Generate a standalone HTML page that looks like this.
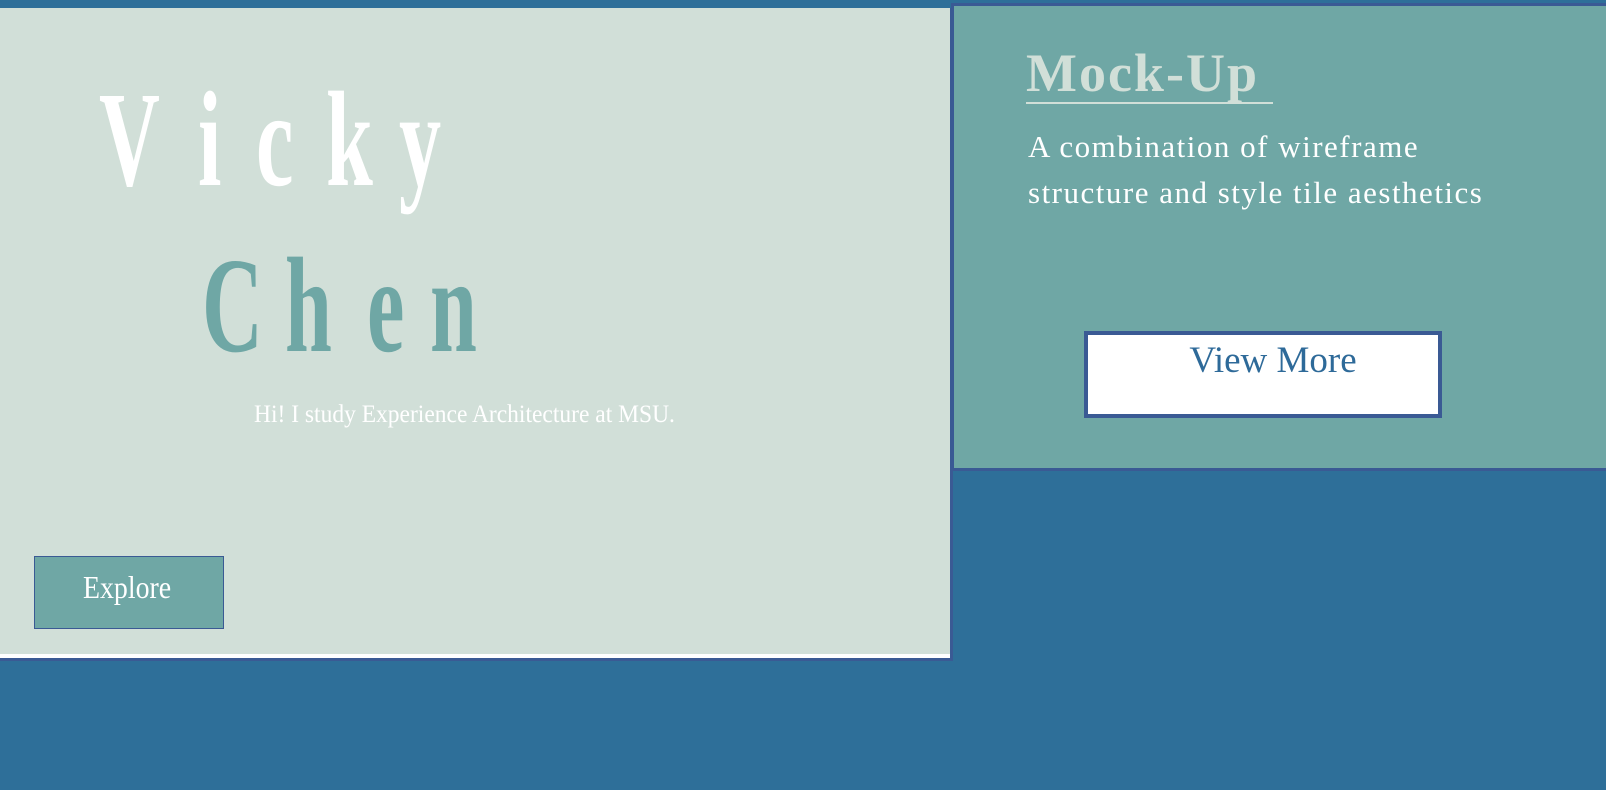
<!DOCTYPE html>
<html><head><meta charset="utf-8"><style>
html,body{margin:0;padding:0;width:1606px;height:790px;overflow:hidden;background:#2e6f99;font-family:"Liberation Serif",serif;position:relative}
.left{position:absolute;left:0;top:8px;width:950px;height:650px;background:#d1dfd8;border-right:3px solid #3a5a94;border-bottom:3px solid #3a5a94;box-shadow:inset 0 -4px 0 #fff}
.right{position:absolute;left:951px;top:3px;width:652px;height:462px;background:#6fa7a5;border:3px solid #3a5a94}
.l{position:absolute;transform-origin:0 0;transform:scaleX(.62);font-size:136px;line-height:1;font-weight:bold}
.v{color:#fff}.c{color:#6fa7a5}
</style></head><body>
<div class="left"></div>
<div class="l v" style="left:99px;top:72px">V</div>
<div class="l v" style="left:198px;top:72px">i</div>
<div class="l v" style="left:256px;top:72px">c</div>
<div class="l v" style="left:326px;top:72px">k</div>
<div class="l v" style="left:399px;top:72px">y</div>
<div class="l c" style="left:202px;top:238px">C</div>
<div class="l c" style="left:285px;top:238px">h</div>
<div class="l c" style="left:367px;top:238px">e</div>
<div class="l c" style="left:430px;top:238px">n</div>
<div style="position:absolute;left:254px;top:401px;font-size:25px;color:#fff;transform-origin:0 0;transform:scaleX(.94);white-space:nowrap">Hi! I study Experience Architecture at MSU.</div>
<div style="position:absolute;left:34px;top:556px;width:188px;height:71px;background:#6fa7a5;border:1px solid #3a5a94"></div>
<div style="position:absolute;left:83px;top:569px;font-size:32px;color:#fff;transform-origin:0 0;transform:scaleX(.87)">Explore</div>
<div class="right"></div>
<div style="position:absolute;left:1026px;top:46px;font-size:54px;font-weight:bold;color:#d1dfd8;line-height:1;white-space:nowrap;letter-spacing:2px">Mock-Up</div>
<div style="position:absolute;left:1026px;top:102px;width:247px;height:2px;background:#d1dfd8"></div>
<div style="position:absolute;left:1028px;top:124px;font-size:31px;color:#fff;line-height:46px;white-space:nowrap;letter-spacing:1.5px">A combination of wireframe<br>structure and style tile aesthetics</div>
<div style="position:absolute;left:1084px;top:331px;width:350px;height:79px;background:#fff;border:4px solid #3a5a94"></div>
<div style="position:absolute;left:1094px;top:342px;width:358px;text-align:center;font-size:37px;color:#2e6a99;line-height:1">View More</div>
</body></html>
